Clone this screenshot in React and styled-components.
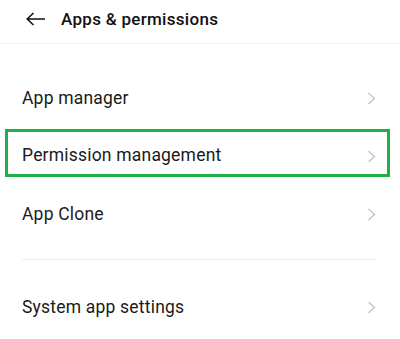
import React from "react";
import styled, { createGlobalStyle } from "styled-components";

const Global = createGlobalStyle`
  html, body { margin: 0; padding: 0; background: #ffffff; }
  body { font-family: Roboto, "Noto Sans", Arial, sans-serif; -webkit-font-smoothing: antialiased; }
`;

const Page = styled.div`
  width: 400px;
  height: 339px;
  background: #fff;
  overflow: hidden;
`;

const Header = styled.header`
  height: 43px;
  display: flex;
  align-items: center;
  gap: 16px;
  padding-left: 26px;
  border-bottom: 1px solid #f1f1f1;
  box-sizing: content-box;
`;

const BackButton = styled.span`
  display: flex;
  width: 19px;
  height: 14px;
  margin-top: -5px;
`;

const Title = styled.h1`
  margin: 0;
  margin-top: -6px;
  font-size: 17px;
  font-weight: 500;
  color: #111;
  letter-spacing: 0.3px;
`;

const List = styled.div`
  padding-top: 25px;
`;

const Row = styled.div`
  position: relative;
  height: 58px;
  display: flex;
  align-items: center;
  justify-content: space-between;
  padding: 0 24px 0 22px;
  &::before {
    content: "";
    display: ${(p) => (p.$highlighted ? "block" : "none")};
    position: absolute;
    left: 5px;
    right: 10px;
    top: 2px;
    height: 42px;
    border: 3.5px solid #22ad4b;
  }
`;

const Label = styled.span`
  font-size: 17.5px;
  letter-spacing: 0.2px;
  color: #1a1a1a;
  margin-top: ${(p) => p.$offset || 0}px;
`;

const Divider = styled.div`
  height: 1px;
  background: #ececec;
  margin: 16px 23px 18px 22px;
`;

const Chevron = () => (
  <svg width="9" height="13" viewBox="0 0 9 13">
    <polyline points="1.5,1 7.5,6.5 1.5,12" fill="none" stroke="#c3c3c3" strokeWidth="1.3" />
  </svg>
);

const Arrow = () => (
  <svg width="19" height="14" viewBox="0 0 19 14">
    <path d="M19 7H1.5M7.5 1L1.2 7l6.3 6" fill="none" stroke="#111" strokeWidth="1.5" />
  </svg>
);

export default function App() {
  return (
    <Page>
      <Global />
      <Header>
        <BackButton><Arrow /></BackButton>
        <Title>Apps &amp; permissions</Title>
      </Header>
      <List>
        <Row>
          <Label>App manager</Label>
          <Chevron />
        </Row>
        <Row $highlighted>
          <Label $offset={-2}>Permission management</Label>
          <Chevron />
        </Row>
        <Row>
          <Label>App Clone</Label>
          <Chevron />
        </Row>
        <Divider />
        <Row>
          <Label>System app settings</Label>
          <Chevron />
        </Row>
      </List>
    </Page>
  );
}
